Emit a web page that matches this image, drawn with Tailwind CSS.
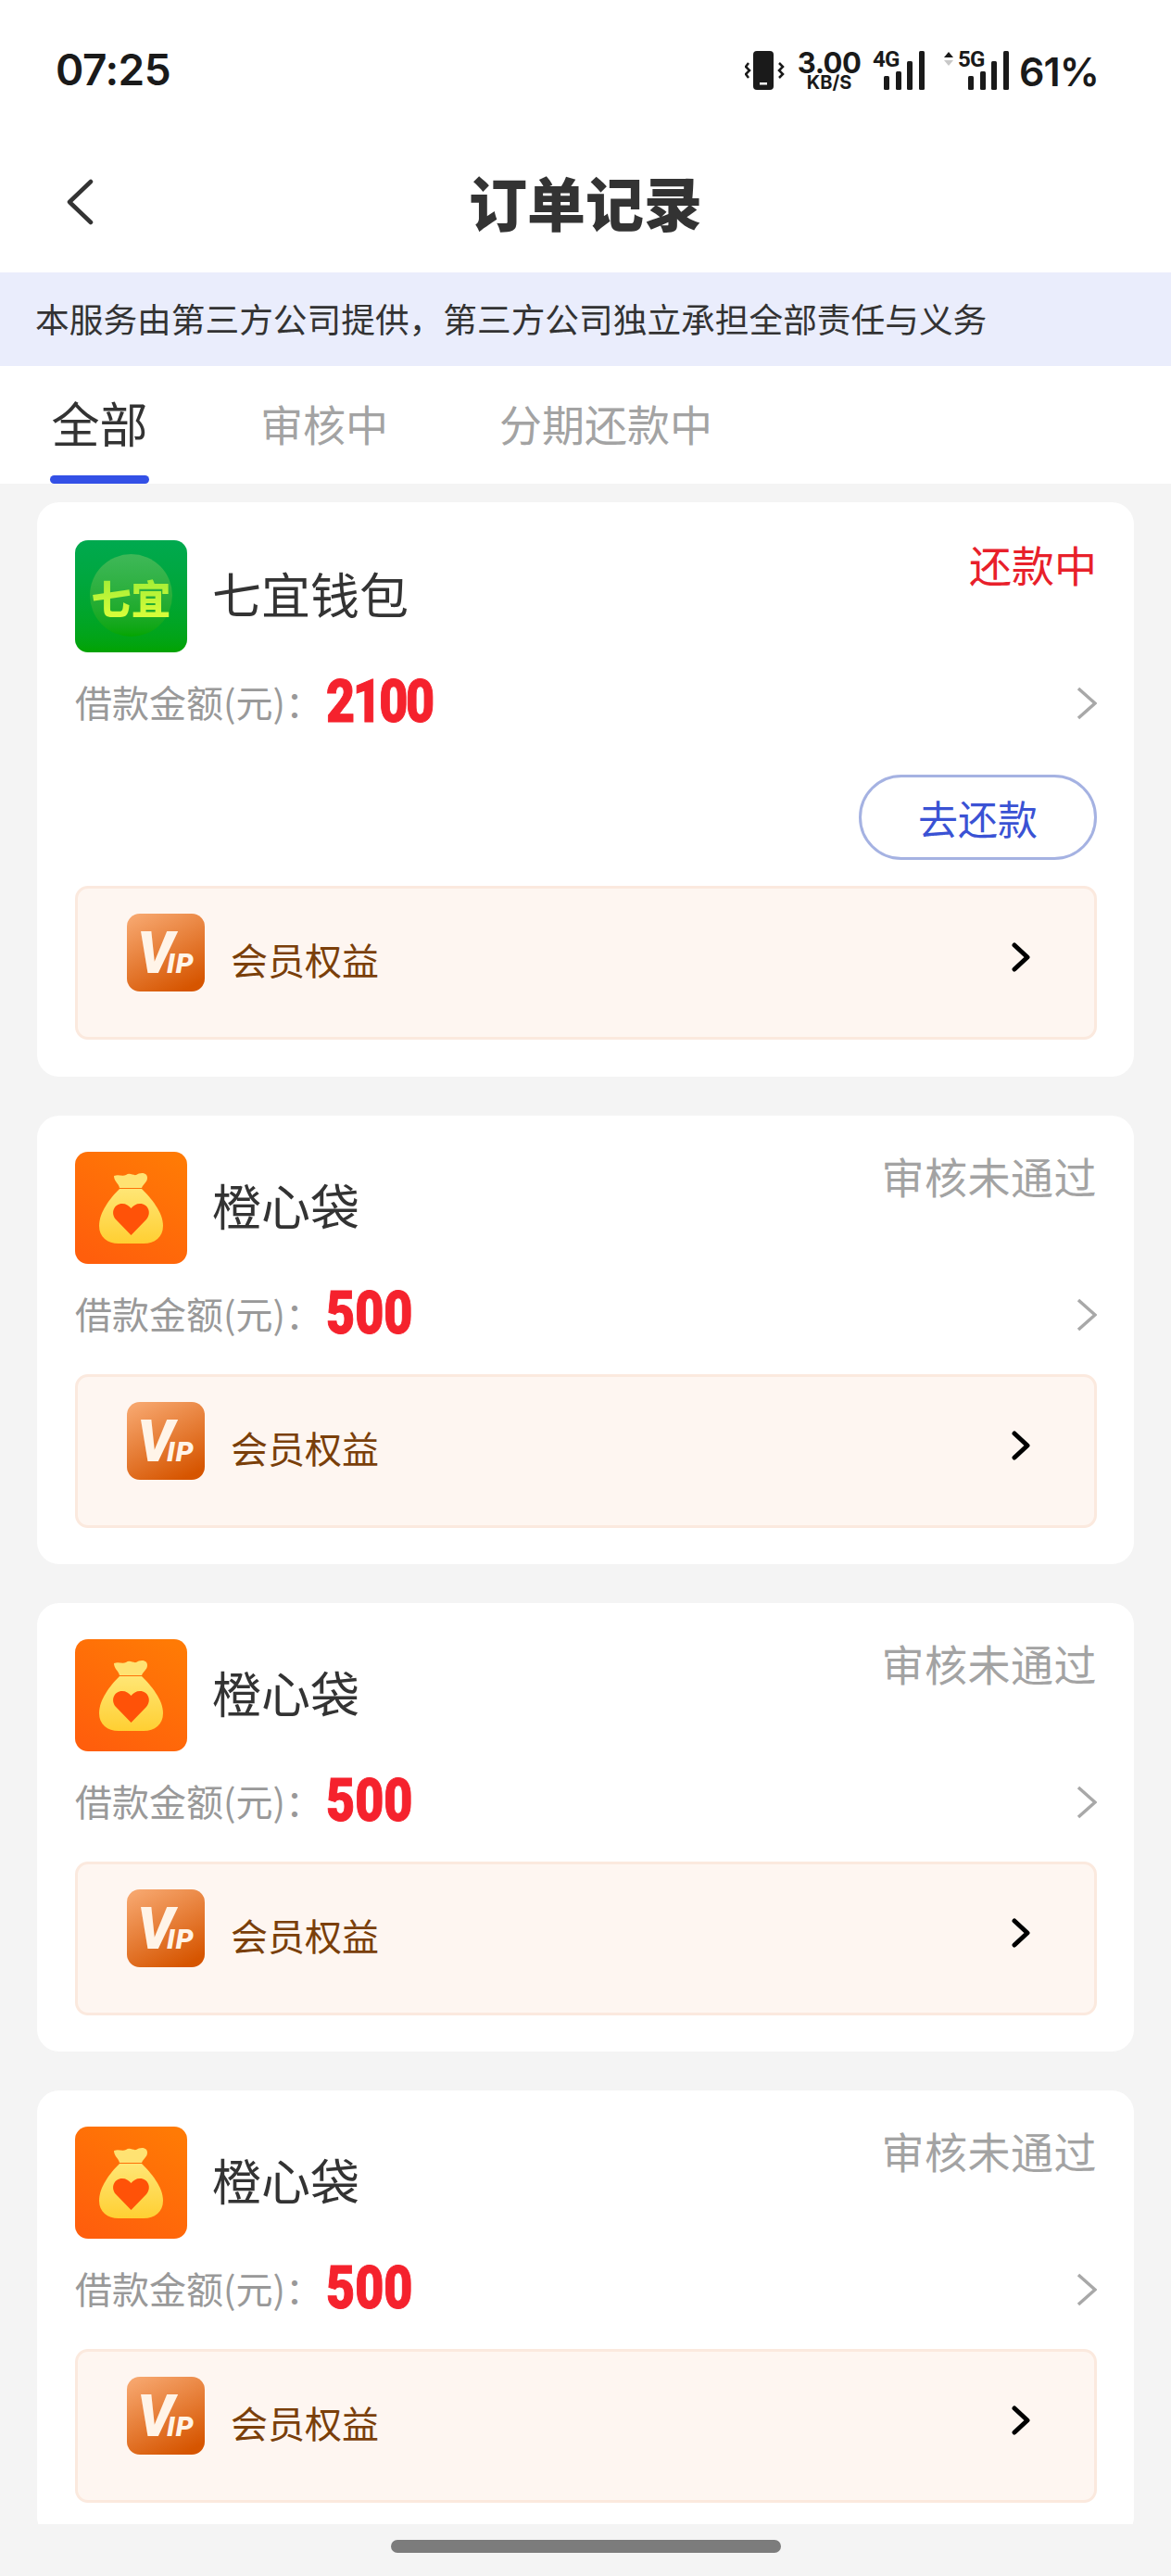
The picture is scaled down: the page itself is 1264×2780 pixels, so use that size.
<!DOCTYPE html>
<html lang="zh-CN">
<head>
    <meta charset="utf-8">
    <title>订单记录</title>
    <meta name="viewport" content="width=device-width, initial-scale=1.0">
    <script src="https://cdn.jsdelivr.net/npm/@tailwindcss/browser@4"></script>
</head>
<body class="bg-[#f4f4f4] text-[#333333] font-['Noto_Sans_CJK_SC',sans-serif]">
    <!-- Shared icons -->
    <svg class="absolute w-0 h-0" aria-hidden="true">
        <defs>
            <linearGradient id="vipBg" x1="0.2" y1="0" x2="0.7" y2="1">
                <stop offset="0" stop-color="#f6a56c"/>
                <stop offset="1" stop-color="#d65500"/>
            </linearGradient>
            <linearGradient id="bagBg" x1="0.8" y1="0" x2="0.2" y2="1">
                <stop offset="0" stop-color="#ff7a05"/>
                <stop offset="1" stop-color="#ff5e0c"/>
            </linearGradient>
            <linearGradient id="bagBody" x1="0" y1="0" x2="0" y2="1">
                <stop offset="0" stop-color="#ffe675"/>
                <stop offset="1" stop-color="#ffcf32"/>
            </linearGradient>
            <symbol id="vip" viewBox="0 0 84 84">
                <rect width="84" height="84" rx="14" fill="url(#vipBg)"/>
                <text x="11" y="64" font-family="Roboto" font-style="italic" font-weight="900" font-size="62" fill="#fff4e8">V</text>
                <text x="43" y="64" font-family="Roboto" font-style="italic" font-weight="900" font-size="30" letter-spacing="1" fill="#fff4e8">IP</text>
            </symbol>
            <symbol id="bag" viewBox="0 0 121 121">
                <rect width="121" height="121" rx="14" fill="url(#bagBg)"/>
                <path d="M42 26C47 24 51 27 55 25C59 22 63 26 66 25C70 22 78 22 78 28C78 33 74 34 72 39L48 39C47 34 42 32 42 26Z" fill="#ffe272"/>
                <path d="M48 40L72 40C82 50 95 65 95 80C95 92 86 99 74 99L47 99C35 99 26 92 26 80C26 65 38 50 48 40Z" fill="url(#bagBody)"/>
                <path d="M60.500 90L44 73C38 66 42 56 51 56C55 56 58 58 60.500 61C63 58 66 56 70 56C79 56 83 66 77 73Z" fill="#ff5208"/>
            </symbol>
            <symbol id="chevGray" viewBox="0 0 22 36">
                <path d="M2 2L20 18L2 34" fill="none" stroke="#a8a8a8" stroke-width="3.500"/>
            </symbol>
            <symbol id="chevBlack" viewBox="0 0 20 32">
                <path d="M3 3L17 16L3 29" fill="none" stroke="#000" stroke-width="5" stroke-linecap="round" stroke-linejoin="round"/>
            </symbol>
            <symbol id="bars" viewBox="0 0 44 42">
                <rect x="0" y="27" width="6" height="15" rx="1.500" fill="#1a1a1a"/>
                <rect x="13" y="22" width="6" height="20" rx="1.500" fill="#1a1a1a"/>
                <rect x="25" y="11" width="6" height="31" rx="1.500" fill="#1a1a1a"/>
                <rect x="38" y="0" width="6" height="42" rx="1.500" fill="#1a1a1a"/>
            </symbol>
        </defs>
    </svg>

    <div class="h-[2780px] overflow-hidden flex flex-col">
        <!-- Status bar -->
        <div class="bg-white h-[146px] shrink-0 flex justify-between pl-[60px] pr-[78px] pt-[50px] text-[#1a1a1a]">
            <span class="font-['Inter',sans-serif] font-semibold text-[46px] leading-[50px] tracking-[-0.5px]">07:25</span>
            <div class="flex items-start h-[50px] pt-[5px]">
                <svg class="w-[44px] h-[42px]" viewBox="0 0 44 42">
                    <rect x="9" y="0" width="22" height="42" rx="4" fill="#1a1a1a"/>
                    <rect x="16" y="34" width="8" height="2.500" fill="#fff"/>
                    <path d="M4 13L1 17L5 21L1 25L4 29M37 13L41 17L37 21L41 25L37 29" fill="none" stroke="#1a1a1a" stroke-width="2.500"/>
                </svg>
                <div class="w-[70px] ml-[12px] flex flex-col items-center font-['Inter',sans-serif] font-bold">
                    <span class="text-[31px] leading-[26px] tracking-[-0.5px]">3.00</span>
                    <span class="text-[20px] leading-[17px]">KB/S</span>
                </div>
                <div class="relative w-[56px] h-[42px] ml-[12px]">
                    <span class="absolute left-0 top-[-3px] font-['Roboto',sans-serif] font-bold text-[24px] leading-[24px] tracking-[-1px]">4G</span>
                    <svg class="absolute right-0 top-0 w-[44px] h-[42px]"><use href="#bars"/></svg>
                </div>
                <div class="relative w-[71px] h-[42px] ml-[20px]">
                    <svg class="absolute left-0 top-0 w-[12px] h-[17px]" viewBox="0 0 12 17">
                        <path d="M6 1L11 7L1 7Z" fill="#1a1a1a"/>
                        <path d="M6 16L11 10L1 10Z" fill="#c8c8c8"/>
                    </svg>
                    <span class="absolute left-[16px] top-[-3px] font-['Roboto',sans-serif] font-bold text-[24px] leading-[24px] tracking-[-1px]">5G</span>
                    <svg class="absolute right-0 top-0 w-[44px] h-[42px]"><use href="#bars"/></svg>
                </div>
                <span class="ml-[11px] font-['Inter',sans-serif] font-semibold text-[43px] leading-[44px] tracking-[-1px]">61%</span>
            </div>
        </div>

        <!-- Nav bar -->
        <div class="relative bg-white h-[148px] shrink-0 flex items-center justify-center">
            <svg class="absolute left-[70px] top-[47px] w-[32px] h-[50px]" viewBox="0 0 32 50">
                <path d="M28 3L5 25L28 47" fill="none" stroke="#333333" stroke-width="4.500" stroke-linecap="round" stroke-linejoin="round"/>
            </svg>
            <h1 class="text-[63px] leading-[80px] font-black mb-[7px]">订单记录</h1>
        </div>

        <!-- Notice -->
        <div class="bg-[#eaedfc] h-[101px] shrink-0 flex items-center pl-[38px] pb-[4px] text-[36.700px] leading-[50px]">本服务由第三方公司提供，第三方公司独立承担全部责任与义务</div>

        <!-- Tabs -->
        <div class="bg-white h-[127px] shrink-0 flex items-start pl-[54px] pt-[26px] text-[#a3a3a3] text-[46px] leading-[70px]">
            <div class="relative w-[107px] flex justify-center text-[52px] text-[#333333]">
                全部
                <span class="absolute left-0 top-[92px] w-[107px] h-[9px] rounded-t-[5px] rounded-b-[5px] bg-[#3350e6]"></span>
            </div>
            <span class="ml-[120px]">审核中</span>
            <span class="ml-[120px]">分期还款中</span>
        </div>

        <!-- Orders -->
        <div class="h-[2202px] shrink-0 overflow-hidden px-[40px] pt-[20px] flex flex-col gap-[42px]">
            <!-- Order 1 -->
            <div class="bg-white rounded-[24px] pl-[41px] pr-[40px] pt-[41px] pb-[40px] shrink-0">
                <div class="flex items-start">
                    <div class="w-[121px] h-[121px] rounded-[14px] bg-gradient-to-b from-[#00a94f] to-[#02a300] flex items-center justify-center relative overflow-hidden">
                        <span class="absolute left-[16px] top-[15px] w-[89px] h-[89px] rounded-full bg-gradient-to-b from-[#3eb858] to-[#04a500]"></span>
                        <span class="relative font-black text-[43px] leading-[50px] bg-gradient-to-b from-[#9aeb35] to-[#dcff3a] bg-clip-text text-transparent">七宜</span>
                    </div>
                    <span class="ml-[27px] text-[53px] leading-[115px]">七宜钱包</span>
                    <span class="ml-auto -mt-[3px] text-[#e8202a] text-[46px] leading-[56px]">还款中</span>
                </div>
                <div class="flex items-center h-[60px] mt-[24px]">
                    <span class="w-[271px] mb-[3px] text-[#999999] text-[40px] leading-[60px]">借款金额(元)：</span>
                    <span class="origin-left scale-x-[0.84] font-['Roboto',sans-serif] font-black text-[#f5222d] [-webkit-text-stroke:1px_#f5222d] text-[64px] leading-[60px] tracking-[-3px]">2100</span>
                    <svg class="ml-auto mt-[2px] w-[22px] h-[36px]"><use href="#chevGray"/></svg>
                </div>
                <div class="flex justify-end mt-[48px]">
                    <div class="w-[257px] h-[92px] rounded-full border-[3px] border-[#a5b2e2] flex items-center justify-center text-[#3a52d4] text-[43px] leading-[60px]">去还款</div>
                </div>
                <div class="mt-[28px] h-[166px] rounded-[14px] border-[3px] border-[#fbe9de] bg-[#fef6f1] flex items-start pl-[53px] pr-[69px] pt-[27px]">
                    <svg class="w-[84px] h-[84px] shrink-0"><use href="#vip"/></svg>
                    <span class="ml-[28px] mt-[7px] text-[#7a3f0a] text-[40px] leading-[84px]">会员权益</span>
                    <svg class="ml-auto mt-[31px] w-[20px] h-[32px]"><use href="#chevBlack"/></svg>
                </div>
            </div>

            <!-- Order 2 -->
            <div class="bg-white rounded-[24px] pl-[41px] pr-[40px] pt-[39px] pb-[39px] shrink-0">
                <div class="flex items-start">
                    <svg class="w-[121px] h-[121px] shrink-0"><use href="#bag"/></svg>
                    <span class="ml-[27px] text-[53px] leading-[115px]">橙心袋</span>
                    <span class="ml-auto -mt-[3px] text-[#a3a3a3] text-[46px] leading-[56px] tracking-[0.5px]">审核未通过</span>
                </div>
                <div class="flex items-center h-[60px] mt-[24px]">
                    <span class="w-[271px] mb-[3px] text-[#999999] text-[40px] leading-[60px]">借款金额(元)：</span>
                    <span class="origin-left scale-x-[0.84] font-['Roboto',sans-serif] font-black text-[#f5222d] [-webkit-text-stroke:1px_#f5222d] text-[64px] leading-[60px]">500</span>
                    <svg class="ml-auto mt-[2px] w-[22px] h-[36px]"><use href="#chevGray"/></svg>
                </div>
                <div class="mt-[35px] h-[166px] rounded-[14px] border-[3px] border-[#fbe9de] bg-[#fef6f1] flex items-start pl-[53px] pr-[69px] pt-[27px]">
                    <svg class="w-[84px] h-[84px] shrink-0"><use href="#vip"/></svg>
                    <span class="ml-[28px] mt-[7px] text-[#7a3f0a] text-[40px] leading-[84px]">会员权益</span>
                    <svg class="ml-auto mt-[31px] w-[20px] h-[32px]"><use href="#chevBlack"/></svg>
                </div>
            </div>

            <!-- Order 3 -->
            <div class="bg-white rounded-[24px] pl-[41px] pr-[40px] pt-[39px] pb-[39px] shrink-0">
                <div class="flex items-start">
                    <svg class="w-[121px] h-[121px] shrink-0"><use href="#bag"/></svg>
                    <span class="ml-[27px] text-[53px] leading-[115px]">橙心袋</span>
                    <span class="ml-auto -mt-[3px] text-[#a3a3a3] text-[46px] leading-[56px] tracking-[0.5px]">审核未通过</span>
                </div>
                <div class="flex items-center h-[60px] mt-[24px]">
                    <span class="w-[271px] mb-[3px] text-[#999999] text-[40px] leading-[60px]">借款金额(元)：</span>
                    <span class="origin-left scale-x-[0.84] font-['Roboto',sans-serif] font-black text-[#f5222d] [-webkit-text-stroke:1px_#f5222d] text-[64px] leading-[60px]">500</span>
                    <svg class="ml-auto mt-[2px] w-[22px] h-[36px]"><use href="#chevGray"/></svg>
                </div>
                <div class="mt-[35px] h-[166px] rounded-[14px] border-[3px] border-[#fbe9de] bg-[#fef6f1] flex items-start pl-[53px] pr-[69px] pt-[27px]">
                    <svg class="w-[84px] h-[84px] shrink-0"><use href="#vip"/></svg>
                    <span class="ml-[28px] mt-[7px] text-[#7a3f0a] text-[40px] leading-[84px]">会员权益</span>
                    <svg class="ml-auto mt-[31px] w-[20px] h-[32px]"><use href="#chevBlack"/></svg>
                </div>
            </div>

            <!-- Order 4 -->
            <div class="bg-white rounded-[24px] pl-[41px] pr-[40px] pt-[39px] pb-[39px] shrink-0">
                <div class="flex items-start">
                    <svg class="w-[121px] h-[121px] shrink-0"><use href="#bag"/></svg>
                    <span class="ml-[27px] text-[53px] leading-[115px]">橙心袋</span>
                    <span class="ml-auto -mt-[3px] text-[#a3a3a3] text-[46px] leading-[56px] tracking-[0.5px]">审核未通过</span>
                </div>
                <div class="flex items-center h-[60px] mt-[24px]">
                    <span class="w-[271px] mb-[3px] text-[#999999] text-[40px] leading-[60px]">借款金额(元)：</span>
                    <span class="origin-left scale-x-[0.84] font-['Roboto',sans-serif] font-black text-[#f5222d] [-webkit-text-stroke:1px_#f5222d] text-[64px] leading-[60px]">500</span>
                    <svg class="ml-auto mt-[2px] w-[22px] h-[36px]"><use href="#chevGray"/></svg>
                </div>
                <div class="mt-[35px] h-[166px] rounded-[14px] border-[3px] border-[#fbe9de] bg-[#fef6f1] flex items-start pl-[53px] pr-[69px] pt-[27px]">
                    <svg class="w-[84px] h-[84px] shrink-0"><use href="#vip"/></svg>
                    <span class="ml-[28px] mt-[7px] text-[#7a3f0a] text-[40px] leading-[84px]">会员权益</span>
                    <svg class="ml-auto mt-[31px] w-[20px] h-[32px]"><use href="#chevBlack"/></svg>
                </div>
            </div>
        </div>

        <!-- Home indicator -->
        <div class="h-[56px] shrink-0 flex justify-center pt-[17px]">
            <div class="w-[421px] h-[14px] rounded-full bg-[#7c7c7c]"></div>
        </div>
    </div>
</body>
</html>
